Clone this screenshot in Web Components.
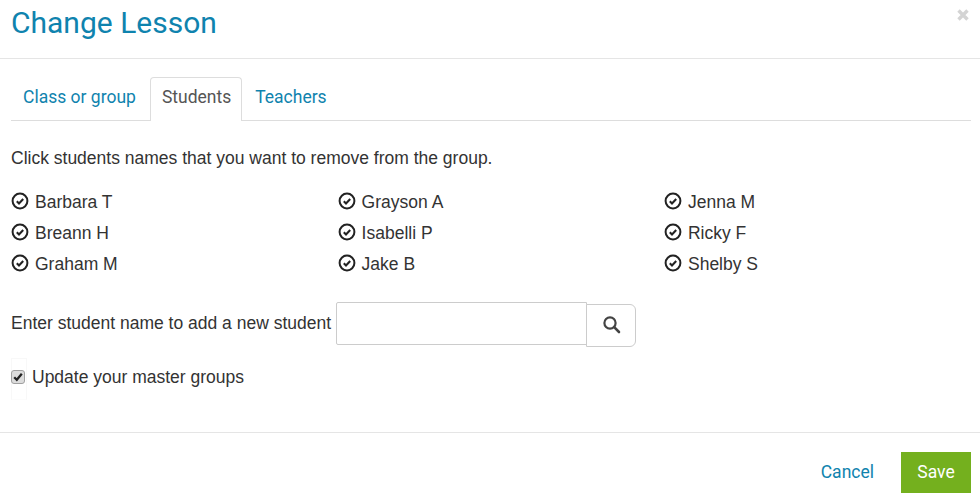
<!DOCTYPE html>
<html><head><meta charset="utf-8"><style>
html,body{margin:0;padding:0;background:#fff}
body{font-family:"Liberation Sans",Arial,sans-serif;color:#333;width:980px;height:497px;overflow:hidden}
</style></head><body>
<lesson-modal>
  <span slot="title">Change Lesson</span>
  <lesson-tabs>
    <lesson-tab>Class or group</lesson-tab>
    <lesson-tab active>Students</lesson-tab>
    <lesson-tab>Teachers</lesson-tab>
  </lesson-tabs>
  <p-intro>Click students names that you want to remove from the group.</p-intro>
  <student-grid>
    <student-item>Barbara T</student-item><student-item>Grayson A</student-item><student-item>Jenna M</student-item>
    <student-item>Breann H</student-item><student-item>Isabelli P</student-item><student-item>Ricky F</student-item>
    <student-item>Graham M</student-item><student-item>Jake B</student-item><student-item>Shelby S</student-item>
  </student-grid>
  <student-search>Enter student name to add a new student</student-search>
  <master-check>Update your master groups</master-check>
</lesson-modal>
<script>
function def(name,html){customElements.define(name,class extends HTMLElement{constructor(){super();this.attachShadow({mode:'open'}).innerHTML=html}})}
def('lesson-modal',`<style>
:host{display:block;width:980px;height:497px;position:relative}
header{height:58px;border-bottom:1px solid #e5e5e5;padding-left:11px;display:flex;align-items:flex-start}
h4{margin:5px 0 0;font:400 30px/36px Roboto,sans-serif;color:#0f83ae}
.x{position:absolute;top:8px;right:10px;width:14px;height:14px}
main{padding:18px 9px 0 11px;box-sizing:border-box;height:374px;border-bottom:1px solid #e5e5e5}
footer{display:flex;justify-content:flex-end;align-items:flex-start;padding:19px 9px 0 0;gap:27px}
.c{font:400 17.5px/24px Roboto,sans-serif;color:#0f83ae;margin-top:8px}
.s{width:70px;height:41px;background:#74b01e;color:#fff;font:400 17.5px/40px Roboto,sans-serif;text-align:center}
</style>
<header><h4><slot name="title"></slot></h4>
<svg class="x" viewBox="0 0 14 14"><path d="M2.5 2.5L11.5 11.5M11.5 2.5L2.5 11.5" stroke="#d4d4d4" stroke-width="3.4" fill="none"/></svg></header>
<main><slot></slot></main>
<footer><span class="c">Cancel</span><span class="s">Save</span></footer>`);
def('lesson-tabs',`<style>:host{display:flex;height:43px;border-bottom:1px solid #ddd;width:960px}</style><slot></slot>`);
def('lesson-tab',`<style>
:host{display:block;height:43px;margin-right:2px;font:400 17.5px/24px Roboto,sans-serif;color:#0f83ae}
:host([active]){margin-right:1px}
div{box-sizing:border-box;height:43px;padding:7px 11px;border:1px solid transparent;border-bottom:0;white-space:nowrap}
:host([active]) div{color:#555;background:#fff;border-color:#ddd;border-radius:4px 4px 0 0;height:44px;padding-right:10px}
</style><div><slot></slot></div>`);
def('p-intro',`<style>:host{display:block;margin-top:26px;font-size:17.5px;line-height:22px;color:#333}</style><slot></slot>`);
def('student-grid',`<style>:host{display:grid;grid-template-columns:326.6px 326.4px 1fr;grid-auto-rows:31px;margin-top:16px;width:960px}</style><slot></slot>`);
def('student-item',`<style>:host{display:flex;align-items:center;gap:6px;font-size:17.5px;height:31px;color:#333}
svg{width:18px;height:18px;flex:none}
span{padding-top:2px;line-height:20px}</style>
<svg viewBox="0 0 18 18"><circle cx="9" cy="9" r="7.4" fill="none" stroke="#222" stroke-width="2"/><path d="M5.8 9.2L8 11.4 12.2 7" fill="none" stroke="#222" stroke-width="2.1"/></svg><span><slot></slot></span>`);
def('student-search',`<style>:host{display:flex;align-items:flex-start;margin-top:24px;font-size:17.5px;color:#333;height:45px}
.l{margin-top:9px;line-height:24px;white-space:nowrap}
.i{margin-left:5px;width:251px;height:43px;box-sizing:border-box;border:1px solid #ccc;border-radius:2px 0 0 2px;background:#fff}
.b{width:50px;height:43px;margin:2px 0 0 -1px;box-sizing:border-box;border:1px solid #ccc;border-radius:0 6px 6px 0;background:#fff;display:flex;align-items:center;justify-content:center;padding-bottom:3px}
svg{width:19px;height:19px}</style>
<span class="l"><slot></slot></span><span class="i"></span><span class="b"><svg viewBox="0 0 19 19"><circle cx="8" cy="8" r="5.6" fill="none" stroke="#444" stroke-width="2.2"/><path d="M12.2 12.2L17 17" stroke="#444" stroke-width="2.6" stroke-linecap="round"/></svg></span>`);
def('master-check',`<style>:host{display:flex;margin-top:11px;height:42px;align-items:flex-start;font-size:17.5px;color:#333}
.f{width:16px;height:42px;box-sizing:border-box;border:1px solid #f8f8f8;border-bottom-color:#fcfcfc;display:flex;align-items:flex-start;justify-content:flex-start}
.k{width:14px;height:14px;box-sizing:border-box;background:#dcdcdc;border:1px solid #a0a0a0;border-radius:3px;display:block;flex:none;margin:11px 0 0 -1px}
svg{display:block;width:12px;height:12px}
span.t{margin:8px 0 0 5px;line-height:22px}</style>
<span class="f"><span class="k"><svg viewBox="0 0 12 12"><path d="M2.2 6.2L4.8 8.8 9.8 2.8" fill="none" stroke="#222" stroke-width="2.3"/></svg></span></span><span class="t"><slot></slot></span>`);
</script>
</body></html>
